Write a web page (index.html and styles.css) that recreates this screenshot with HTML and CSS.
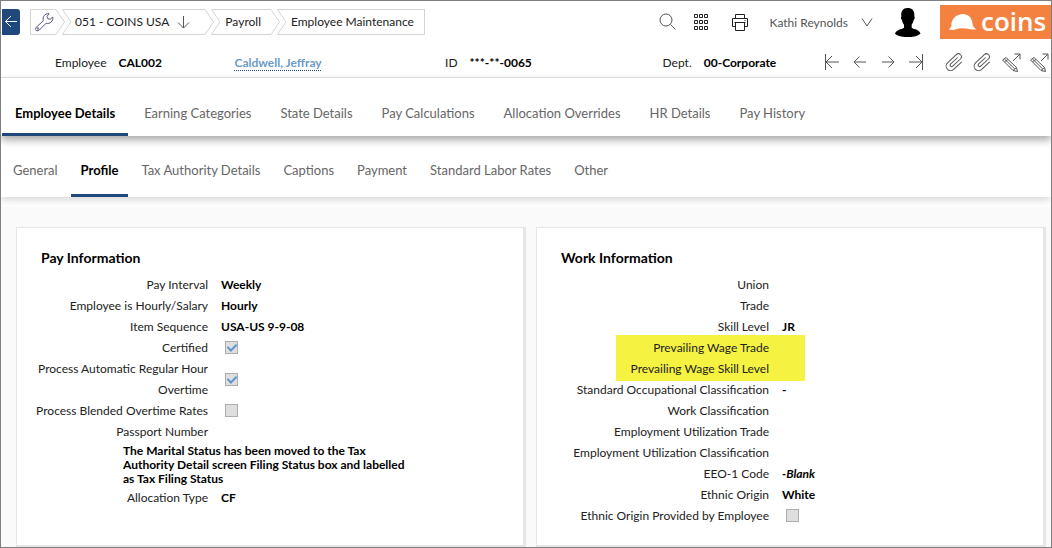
FILE: index.html
```html
<!DOCTYPE html>
<html lang="en">
<head>
<meta charset="utf-8">
<meta name="viewport" content="width=device-width, initial-scale=1">
<title>Employee Maintenance</title>
<link rel="stylesheet" href="styles.css">
</head>
<body>
<svg class="defs" aria-hidden="true">
  <symbol id="cap-left" viewBox="0 0 9 26"><path d="M9 .5H.5L9 13 .5 25.5H9"/></symbol>
  <symbol id="cap-right" viewBox="0 0 9 26"><path d="M0 .5 8.5 13 0 25.5"/></symbol>
  <symbol id="clip" viewBox="0 0 20 20"><path transform="rotate(-43 10 10)" d="M15 8.500H5.500a1.500 1.500 0 0 0 0 3h10.500a3 3 0 0 0 0-6H4a4.500 4.500 0 0 0 0 9h11"/></symbol>
  <symbol id="pencil" viewBox="0 0 20 20"><path d="M1.500 8 5 5.500 15.500 15.500 16.500 19.500 12 18.500ZM3.300 6.800 13.800 17M12 18.500 15.500 15.500M3.500 9.800 7 7.400M13.500 2H19v5.500M19 2 12 9"/></symbol>
</svg>
<div class="page">
  <header class="topbar">
    <button class="back" aria-label="Back"><svg viewBox="0 0 18 26"><path d="M15 12.500H3.500M9 7 3.500 12.500 9 18"/></svg></button>
    <nav aria-label="Breadcrumb">
      <ol class="crumbs">
        <li class="crumb first"><button class="crumb-body tools" aria-label="Tools"><svg viewBox="0 0 20 20"><path d="M2 15.500 9.300 8.800C8.300 5 10.500 1.500 15 1.500L13 4.500l.8 2.200 2.400.5L18.800 5C19.500 9 16 12.300 12 11.300L5.200 18.200C2.700 20 .2 17.500 2 15.500Z"/><circle cx="3.900" cy="16.500" r=".8"/></svg></button><svg class="cap"><use href="#cap-right"/></svg></li>
        <li class="crumb"><svg class="cap"><use href="#cap-left"/></svg><button class="crumb-body">051 - COINS USA<svg class="down" viewBox="0 0 13 14"><path d="M6.500 1v12M1 7.500 6.500 13 12 7.500"/></svg></button><svg class="cap"><use href="#cap-right"/></svg></li>
        <li class="crumb"><svg class="cap"><use href="#cap-left"/></svg><a class="crumb-body roomy" href="#">Payroll</a><svg class="cap"><use href="#cap-right"/></svg></li>
        <li class="crumb last"><svg class="cap"><use href="#cap-left"/></svg><a class="crumb-body roomy" href="#">Employee Maintenance</a></li>
      </ol>
    </nav>
    <div class="actions">
      <button aria-label="Search"><svg viewBox="0 0 18 18"><circle cx="7" cy="7" r="6"/><path d="m11.500 11.500 5 5"/></svg></button>
      <button class="dark apps" aria-label="Applications"><svg viewBox="0 0 18 18"><path d="M2.500 1.500h3v3h-3zM7.500 1.500h3v3h-3zM12.500 1.500h3v3h-3zM2.500 7.500h3v3h-3zM7.500 7.500h3v3h-3zM12.500 7.500h3v3h-3zM2.500 13.500h3v3h-3zM7.500 13.500h3v3h-3zM12.500 13.500h3v3h-3z"/></svg></button>
      <button class="dark" aria-label="Print"><svg viewBox="0 0 18 18"><path d="M4.500 5V1.500h9V5M4.500 13.500h-3v-8h15v8h-3M4.500 9.500h9v8h-9zM3.500 9.500h11M13.500 7.500h1"/></svg></button>
      <button class="user">Kathi Reynolds<svg viewBox="0 0 12 9"><path d="M1 .5 6 8 11 .5"/></svg></button>
    </div>
    <svg class="avatar" viewBox="0 0 26 29" role="img" aria-label="Kathi Reynolds"><path d="M12.500 0C17 0 20 2.500 19.300 8.500c1 .5.3 3-.6 3.600-.5 2.600-1.400 3.600-2 4.600v3c3 2 7.500 1.600 8.800 6C22 28.500 17 29 13 29S3 28.500 0 25.700c1.500-4.500 6-4 9-6v-3c-1-1-1.600-2.200-2-4.600-1-.6-1.600-3.100-.6-3.600C5.700 3 8 0 12.500 0Z"/></svg>
    <div class="logo"><svg viewBox="0 0 28 17" aria-hidden="true"><path d="M0 15.500 2.500 12C1.500 5 7.500 0 14 0c5 0 9 3.500 9.500 9.500.5 3 1.500 4.500 4 6-8 .2-10-1.200-15-1.200S6 17 0 15.500Z"/></svg>coins</div>
  </header>

  <section class="record">
    <div class="field"><span>Employee</span><b>CAL002</b></div>
    <div class="field"><a href="#">Caldwell, Jeffray</a></div>
    <div class="field"><span>ID</span><b>***-**-0065</b></div>
    <div class="field"><span>Dept.</span><b>00-Corporate</b></div>
    <div class="tools-group">
      <button aria-label="First"><svg viewBox="0 0 16 16"><path d="M1.500 0v16M15 8H2M8 2 2 8l6 6"/></svg></button>
      <button aria-label="Previous"><svg viewBox="0 0 16 16"><path d="M14 8H2M7.500 2.500 2 8l5.500 5.500"/></svg></button>
      <button aria-label="Next"><svg viewBox="0 0 16 16"><path d="M2 8h12M8.500 2.500 14 8l-5.500 5.500"/></svg></button>
      <button aria-label="Last"><svg viewBox="0 0 16 16"><path d="M14.500 0v16M1 8h13M8 2l6 6-6 6"/></svg></button>
    </div>
    <div class="tools-group large">
      <button aria-label="Attachments"><svg><use href="#clip"/></svg></button>
      <button aria-label="Record attachments"><svg><use href="#clip"/></svg></button>
      <button aria-label="Edit notes"><svg><use href="#pencil"/></svg></button>
      <button aria-label="Edit record notes"><svg><use href="#pencil"/></svg></button>
    </div>
  </section>

  <nav class="tabs main-tabs" aria-label="Sections">
    <a class="active" href="#">Employee Details</a><a href="#">Earning Categories</a><a href="#">State Details</a><a href="#">Pay Calculations</a><a href="#">Allocation Overrides</a><a href="#">HR Details</a><a href="#">Pay History</a>
  </nav>
  <nav class="tabs sub-tabs" aria-label="Employee details">
    <a href="#">General</a><a class="active" href="#">Profile</a><a href="#">Tax Authority Details</a><a href="#">Captions</a><a href="#">Payment</a><a href="#">Standard Labor Rates</a><a href="#">Other</a>
  </nav>

  <main class="cards">
    <section class="card pay">
      <h2>Pay Information</h2>
      <div class="row"><span>Pay Interval</span><b>Weekly</b></div>
      <div class="row"><span>Employee is Hourly/Salary</span><b>Hourly</b></div>
      <div class="row"><span>Item Sequence</span><b>USA-US 9-9-08</b></div>
      <div class="row"><label for="certified">Certified</label><input type="checkbox" id="certified" checked></div>
      <div class="row"><label for="auto-overtime">Process Automatic Regular Hour Overtime</label><input type="checkbox" id="auto-overtime" checked></div>
      <div class="row"><label for="blended">Process Blended Overtime Rates</label><input type="checkbox" id="blended"></div>
      <div class="row"><span>Passport Number</span><b></b></div>
      <p class="note">The Marital Status has been moved to the Tax Authority Detail screen Filing Status box and labelled as Tax Filing Status</p>
      <div class="row"><span>Allocation Type</span><b>CF</b></div>
    </section>
    <section class="card work">
      <h2>Work Information</h2>
      <div class="row"><span>Union</span><b></b></div>
      <div class="row"><span>Trade</span><b></b></div>
      <div class="row"><span>Skill Level</span><b>JR</b></div>
      <div class="highlight">
        <div class="row"><span>Prevailing Wage Trade</span><b></b></div>
        <div class="row"><span>Prevailing Wage Skill Level</span><b></b></div>
      </div>
      <div class="row"><span>Standard Occupational Classification</span><b>-</b></div>
      <div class="row"><span>Work Classification</span><b></b></div>
      <div class="row"><span>Employment Utilization Trade</span><b></b></div>
      <div class="row"><span>Employment Utilization Classification</span><b></b></div>
      <div class="row"><span>EEO-1 Code</span><b><i>-Blank</i></b></div>
      <div class="row"><span>Ethnic Origin</span><b>White</b></div>
      <div class="row"><label for="ethnic">Ethnic Origin Provided by Employee</label><input type="checkbox" id="ethnic"></div>
    </section>
  </main>
</div>
</body>
</html>
```
FILE: styles.css
```css
* { box-sizing: border-box; }

body {
  margin: 0;
  background: #fff;
  color: #222;
  font: 12px/21px Lato, Carlito, "Open Sans", sans-serif;
}

button {
  display: flex;
  align-items: center;
  padding: 0;
  border: 0;
  background: none;
  color: inherit;
  font: inherit;
}

a { color: inherit; text-decoration: none; }
b { color: #000; font-weight: 700; }
svg { display: block; flex: none; fill: none; stroke: #555; stroke-width: 1; }
.defs { position: absolute; width: 0; height: 0; }

.page {
  display: flex;
  flex-direction: column;
  min-height: 100vh;
  overflow: hidden;
  border: 1px solid #7f7f7f;
}

/* Top bar */
.topbar { display: flex; align-items: center; height: 42px; }
.back { margin: 0 10px 0 1px; border-radius: 0 3px 3px 0; background: #1f497d; }
.back svg { width: 18px; height: 26px; stroke: #fff; }
.crumbs { display: flex; margin: 0; padding: 0; list-style: none; }
.crumb { display: flex; height: 26px; margin-left: -3px; }
.crumb.first { margin-left: 0; }
.crumb-body {
  display: flex;
  align-items: center;
  padding: 0 4px 1px;
  border: solid #d4d4d4;
  border-width: 1px 0;
}
.cap { width: 9px; height: 26px; stroke: #d4d4d4; }
.tools { width: 26px; padding: 0 0 0 3px; border-left-width: 1px; }
.tools svg { width: 20px; height: 20px; stroke: #5c5480; }
.down { width: 13px; height: 14px; margin: 0 11px 0 8px; }
.roomy { padding: 0 10px 1px 5px; }
.last .crumb-body { border-right-width: 1px; }

.actions { display: flex; align-items: center; gap: 15px; margin-left: auto; color: #555; }
.actions svg { width: 18px; height: 18px; }
.actions .dark svg { stroke: #222; }
.actions .apps { margin-right: 6px; }
.actions .user { gap: 13px; margin-left: 6px; }
.actions .user svg { width: 12px; height: 9px; }
.avatar { width: 26px; height: 29px; margin: 0 19px 0 22px; fill: #000; stroke: none; }
.logo {
  display: flex;
  align-items: center;
  gap: 4px;
  width: 111px;
  height: 34px;
  padding: 0 0 3px 9px;
  background: #f4813f;
  color: #fff;
  font: 600 26px/30px "Open Sans", sans-serif;
}
.logo svg { width: 28px; height: 17px; margin-top: 3px; fill: #fff; stroke: none; }

/* Record header */
.record {
  display: flex;
  align-items: center;
  height: 35px;
  padding: 4px 0 0 54px;
  border-bottom: 1px solid #e5e5e5;
}
.field { display: flex; flex: 210 0 0; gap: 12px; white-space: nowrap; }
.field:first-child { flex-grow: 179; }
.field:nth-child(3) { flex-grow: 217; }
.field:nth-child(4) { flex-grow: 155; }
.field a { color: #6a9bc9; font-weight: 700; text-decoration: underline dotted 1px #1f497d; text-underline-offset: 3px; }
.tools-group { display: flex; }
.tools-group button { justify-content: center; width: 28px; }
.tools-group svg { width: 16px; height: 16px; }
.tools-group.large { margin: 0 -2px 0 11px; }
.tools-group.large svg { width: 20px; height: 20px; }

/* Tabs */
.tabs { position: relative; display: flex; background: #fff; color: #666; font-size: 13px; white-space: nowrap; }
.tabs a { border-bottom: 3px solid transparent; }
.tabs .active { border-color: #1f497d; color: #000; font-weight: 700; }
.main-tabs { z-index: 2; gap: 3px; padding-left: 1px; box-shadow: 0 4px 8px rgba(0, 0, 0, .35); }
.main-tabs a { padding: 25px 13px 9px; line-height: 21px; }
.sub-tabs { z-index: 1; gap: 3px; padding-left: 2px; box-shadow: 0 3px 8px rgba(0, 0, 0, .16); }
.sub-tabs a { padding: 24px 10px 13px; line-height: 21px; }

/* Cards */
.cards {
  display: grid;
  flex: 1;
  grid-template-columns: 1fr 1fr;
  gap: 10px;
  margin-top: 10px;
  padding: 20px 5px 0 15px;
  background: #fafafa;
}
.card {
  padding: 19px 0 16px;
  border: solid #e6e6e6;
  border-width: 1px 3px 2px 1px;
  background: #fff;
}
h2 { margin: 0 0 6px 24px; color: #000; font-size: 14px; font-weight: 700; line-height: 21px; }
.row { display: grid; grid-template-columns: 191px 1fr; align-items: center; gap: 13px; min-height: 21px; }
.work .row { grid-template-columns: 232px 1fr; }
.row > :first-child { padding-left: 12px; text-align: right; }
.row input {
  display: grid;
  place-items: center;
  appearance: none;
  width: 13px;
  height: 13px;
  margin: 0 0 0 4px;
  border: 1px solid #adadad;
  background: #dedede;
}
.row input:checked::before {
  content: "";
  width: 4px;
  height: 7px;
  margin-top: -2px;
  border: solid #5b93cf;
  border-width: 0 2px 2px 0;
  transform: rotate(45deg);
}
.note { width: 290px; margin: 2px 0 1px 106px; color: #000; font-weight: 700; line-height: 14px; }
.highlight { width: 189px; margin: -2px 0 -2px 79px; padding: 2px 0; background: #f5f242; }
.work .highlight .row { grid-template-columns: 153px 1fr; }
.highlight .row > :first-child { padding-left: 0; }
```
